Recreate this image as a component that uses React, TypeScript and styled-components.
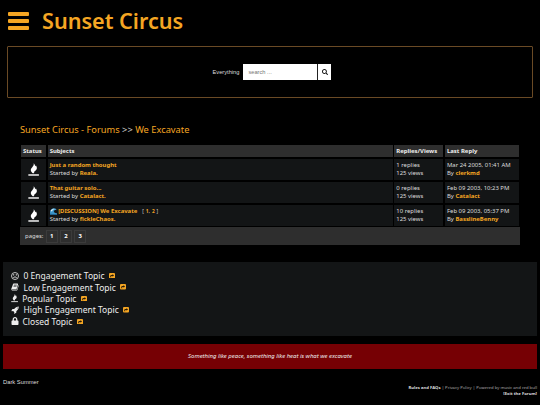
import type { ReactNode } from 'react';
import { FaLock, FaSearch } from 'react-icons/fa';
import styled, { createGlobalStyle } from 'styled-components';

const topics = [
  { title: 'Just a random thought', author: 'Reala.', replies: 1, date: 'Mar 24 2005, 01:41 AM', by: 'clerkmd' },
  { title: 'That guitar solo...', author: 'Catalact.', replies: 0, date: 'Feb 09 2003, 10:23 PM', by: 'Catalact' },
  {
    title: '[DISCUSSION] We Excavate',
    author: 'fickleChaos.',
    replies: 10,
    date: 'Feb 09 2003, 05:37 PM',
    by: 'BasslineBenny',
    wave: true,
  },
];

const legend: { icon: ReactNode; label: string; gap: number }[] = [
  { icon: <FrownIcon />, label: '0 Engagement Topic', gap: 4.5 },
  { icon: <BookIcon />, label: 'Low Engagement Topic', gap: 4.5 },
  { icon: <FireIcon />, label: 'Popular Topic', gap: 4 },
  { icon: <RocketIcon />, label: 'High Engagement Topic', gap: 4.5 },
  { icon: <FaLock width="0.8em" />, label: 'Closed Topic', gap: 3.5 },
];

function FrownIcon() {
  return (
    <svg viewBox="0 0 16 16" width="1em" height="1em" fill="none" stroke="currentColor" strokeWidth="1.6">
      <circle cx="8" cy="8" r="7" />
      <path d="M4.500 12C5.500 9 10.500 9 11.500 12" />
      <circle cx="5.500" cy="5.800" r="0.700" />
      <circle cx="10.500" cy="5.800" r="0.700" />
    </svg>
  );
}

function FireIcon() {
  return (
    <svg viewBox="0 0 16 18" width="0.9em" height="1.04em" fill="currentColor">
      <path d="M8 0C8.6 2 7.800 3.600 6.300 5.400C4.600 7.200 3.600 8.600 4.100 10.600C4.500 12.400 6 13.500 7.400 14.800C8.600 13.700 9.200 12.800 9.300 11.600C11.800 10 13.100 8.200 12.500 5.800C12.200 4.600 11.600 4 11.400 3.200C10.700 3.600 10.500 4 10.300 4.500C10.200 2.700 9.400 1.200 8 0Z" />
      <rect x="0.500" y="15.800" width="15" height="2" />
    </svg>
  );
}

function BookIcon() {
  return (
    <svg viewBox="0 0 1664 1792" width="1em" height="1em" fill="currentColor">
      <path d="M1639 478q40 57 18 129l-275 906q-19 64-76.500 107.500t-122.500 43.500h-923q-77 0-148.500-53.500t-99.500-131.500q-24-67-2-127 0-4 3-27t4-37q1-8-3-21.500t-3-19.500q2-11 8-21t16.500-23.500 16.500-23.500q23-38 45-91.500t30-91.500q3-10 .5-30t-.5-28q3-11 17-28t17-23q21-36 42-92t25-90q1-9-2.500-32t.5-28q4-13 22-30.500t22-22.500q19-26 42.500-84.500t27.500-96.500q1-8-3-25.500t-2-26.500q2-8 9-18t18-23 17-21q8-12 16.500-30.500t15-35 16-36 19.500-32 26.500-23.500 36-11.500 47.500 5.500l-1 3q38-9 51-9h761q74 0 114 56t18 130l-274 906q-36 119-71.500 153.500t-128.500 34.500h-869q-27 0-38 15-11 16-1 43 24 70 144 70h923q29 0 56-15.500t35-41.500l300-987q7-22 5-57 38 15 59 43zm-1064 2q-4 13 2 22.500t20 9.500h608q13 0 25.500-9.500t16.500-22.500l21-64q4-13-2-22.500t-20-9.500h-608q-13 0-25.500 9.500t-16.500 22.500zm-83 256q-4 13 2 22.500t20 9.500h608q13 0 25.500-9.500t16.500-22.500l21-64q4-13-2-22.500t-20-9.500h-608q-13 0-25.500 9.500t-16.500 22.500z" />
    </svg>
  );
}

function RocketIcon() {
  return (
    <svg viewBox="0 0 1664 1792" width="1em" height="1em" fill="currentColor">
      <path d="M1440 448q0-40-28-68t-68-28-68 28-28 68 28 68 68 28 68-28 28-68zM1664 160q0 249-75.500 430.500t-253.500 360.500q-81 80-195 176l-20 379q-2 16-16 26l-384 224q-7 4-16 4-12 0-23-9l-64-64q-13-14-8-32l85-276-281-281-276 85q-3 1-9 1-14 0-23-9l-64-64q-17-19-5-39l224-384q10-14 26-16l379-20q96-114 176-195 188-187 358-258t431-71q14 0 24 9.500t10 22.500z" />
    </svg>
  );
}

function ShareIcon() {
  return (
    <svg viewBox="0 0 12 11" width="6" height="5.5">
      <rect width="12" height="11" rx="2" fill="#f5a623" />
      <path d="M2.500 8.500V6C2.500 4.400 3.600 3.900 7 3.900V2.200L10 5L7 7.600V6H4.500V8.500Z" fill="#24190a" />
    </svg>
  );
}

function WaveIcon() {
  return (
    <svg viewBox="0 0 14 14" width="7" height="7">
      <path d="M0 13V7C1 3 4 .5 8 .5C11 .5 13 2 13 4.500C11.500 3.300 9 3.500 8 5.500C7 8 9 10 14 10.500V13Z" fill="#3b94c8" />
      <path d="M1 6C3 2 7 0 11 2.500C9 2 5 3 4 7Z" fill="#d5edf7" />
      <path d="M0 13.500V11C4 12.500 9 12.500 14 11V13.500Z" fill="#226c9e" />
    </svg>
  );
}

export default function App() {
  return (
    <>
      <GlobalStyle />
      <Header>
        <MenuButton aria-label="Menu">
          <span />
          <span />
          <span />
        </MenuButton>
        <SiteTitle>Sunset Circus</SiteTitle>
      </Header>
      <SearchPanel>
        <SearchLabel>Everything</SearchLabel>
        <SearchInput placeholder="search ..." />
        <SearchButton aria-label="Search">
          <FaSearch />
        </SearchButton>
      </SearchPanel>
      <Forum>
        <Breadcrumb>
          <a>Sunset Circus - Forums</a> &gt;&gt; <a>We Excavate</a>
        </Breadcrumb>
        <Table>
          <HeadCell>Status</HeadCell>
          <HeadCell>Subjects</HeadCell>
          <HeadCell>Replies/Views</HeadCell>
          <HeadCell>Last Reply</HeadCell>
          {topics.map((topic) => (
            <Row key={topic.title}>
              <StatusCell>
                <FireIcon />
              </StatusCell>
              <Cell>
                <div>
                  {topic.wave && <WaveIcon />}
                  <Strong $indent={topic.wave}>{topic.title}</Strong>
                  {topic.wave && (
                    <TopicPages>
                      [ <b>1</b>, <b>2</b> ]
                    </TopicPages>
                  )}
                </div>
                <div>
                  Started by <Strong>{topic.author}</Strong>
                </div>
              </Cell>
              <Cell>
                <div>{topic.replies} replies</div>
                <div>125 views</div>
              </Cell>
              <Cell>
                <div>{topic.date}</div>
                <div>
                  By <Strong>{topic.by}</Strong>
                </div>
              </Cell>
            </Row>
          ))}
        </Table>
        <Pager>
          <span>pages:</span>
          {[1, 2, 3].map((page) => (
            <PageLink key={page}>{page}</PageLink>
          ))}
        </Pager>
      </Forum>
      <Legend>
        {legend.map((item) => (
          <LegendItem key={item.label} $gap={item.gap}>
            {item.icon}
            <span>{item.label}</span>
            <ShareIcon />
          </LegendItem>
        ))}
      </Legend>
      <Quote>Something like peace, something like heat is what we excavate</Quote>
      <Footer>
        <ThemeName>Dark Summer</ThemeName>
        <FooterLinks>
          <div>
            <b>Rules and FAQs</b> | Privacy Policy | Powered by music and red bull
          </div>
          <div>
            <b>[Exit the Forum]</b>
          </div>
        </FooterLinks>
      </Footer>
    </>
  );
}

const GlobalStyle = createGlobalStyle`
  * {
    box-sizing: border-box;
  }
  body {
    margin: 0;
    background: #000;
    color: #ddd;
    font-family: 'Noto Sans', sans-serif;
    font-size: 5.95px;
    overflow: hidden;
  }
  svg {
    flex: none;
  }
`;

const Header = styled.header`
  display: flex;
  align-items: center;
  gap: 13px;
  height: 46px;
  padding: 0 0 4px 8px;
`;

const MenuButton = styled.button`
  display: flex;
  flex-direction: column;
  justify-content: space-between;
  width: 21px;
  height: 18px;
  padding: 0;
  border: 0;
  background: none;

  span {
    width: 21px;
    height: 4px;
    border-radius: 1px;
    background: #f5a623;
  }
`;

const SiteTitle = styled.h1`
  margin: 0;
  color: #f5a623;
  font-size: 21.6px;
  font-weight: 600;
  line-height: 28px;
  white-space: nowrap;
`;

const SearchPanel = styled.form`
  display: flex;
  align-items: center;
  justify-content: center;
  height: 52px;
  margin: 0 7px;
  padding-left: 4px;
  border: 1px solid #6a4a25;
  border-radius: 1px;
  font-family: 'Liberation Sans', sans-serif;
`;

const SearchLabel = styled.label`
  margin-right: 4px;
  font-size: 5.7px;
`;

const SearchInput = styled.input`
  width: 74px;
  height: 16px;
  padding: 0 5px;
  border: 0;
  border-radius: 0;
  background: #fff;
  font-family: 'Liberation Sans', sans-serif;
  font-size: 5.7px;

  &::placeholder {
    color: #757575;
  }
`;

const SearchButton = styled.button`
  display: flex;
  align-items: center;
  justify-content: center;
  width: 14px;
  height: 16px;
  padding: 0;
  border: 0;
  border-left: 1px solid #222;
  background: #fff;
  color: #111;
  font-size: 6px;
`;

const Forum = styled.main`
  margin: 25px 20px 0;
`;

const Breadcrumb = styled.nav`
  height: 22px;
  color: #ccc;
  font-size: 9.3px;
  line-height: 14px;
  white-space: nowrap;

  a {
    color: #f5a623;
  }
`;

const Table = styled.section`
  display: grid;
  grid-template-columns: 25px 345px 49px 74px;
  grid-template-rows: 12px repeat(3, 21px);
  gap: 2px 1.67px;
  height: 82px;
  padding: 0 1px;
`;

const HeadCell = styled.div`
  padding-left: 2px;
  background: #2e2e2e;
  color: #eee;
  font-weight: 700;
  line-height: 12px;
`;

const Row = styled.div`
  display: contents;
`;

const Cell = styled.div`
  padding: 2px 0 0 2px;
  background: #131516;
  line-height: 8px;
  white-space: nowrap;

  > div {
    display: flex;
    align-items: center;
    white-space: pre;
  }
`;

const StatusCell = styled(Cell)`
  display: flex;
  justify-content: center;
  align-items: center;
  padding: 0;
  color: #fff;
  font-size: 12.5px;
`;

const Strong = styled.strong<{ $indent?: boolean }>`
  margin-left: ${(props) => (props.$indent ? 1.5 : 0)}px;
  color: #f5a623;
  font-weight: 700;
`;

const TopicPages = styled.span`
  margin-left: 5px;
  font-size: 4.8px;
  letter-spacing: 0.3px;

  b {
    color: #f5a623;
  }
`;

const Pager = styled.div`
  display: flex;
  align-items: center;
  gap: 2.3px;
  height: 18px;
  padding-left: 5px;
  background: #2e2e2e;
`;

const PageLink = styled.a`
  width: 12px;
  height: 13px;
  border: 1px solid #3b3b3b;
  color: #fff;
  font-weight: 700;
  line-height: 11px;
  text-align: center;
`;

const Legend = styled.section`
  height: 74px;
  margin: 17px 3px 0;
  padding: 8px 8px 0;
  background: #131516;
`;

const LegendItem = styled.div<{ $gap: number }>`
  display: flex;
  align-items: center;
  height: 11.4px;
  color: #eee;
  font-size: 8.5px;
  white-space: nowrap;

  > svg:first-child {
    font-size: 8px;
  }

  > span {
    margin: 0 4.3px 0 ${(props) => props.$gap}px;
  }
`;

const Quote = styled.blockquote`
  height: 25px;
  margin: 8px 3px 0;
  background: #760004;
  color: #eee;
  font-style: italic;
  line-height: 25px;
  text-align: center;
`;

const Footer = styled.footer`
  display: flex;
  justify-content: space-between;
  padding: 8.5px 3px 0;
`;

const ThemeName = styled.div`
  font-family: 'Liberation Sans', sans-serif;
  font-size: 5.8px;
  line-height: 8px;
`;

const FooterLinks = styled.div`
  padding-top: 6.5px;
  color: #aaa;
  font-size: 4.23px;
  line-height: 6px;
  text-align: right;

  b {
    color: #ddd;
  }
`;
